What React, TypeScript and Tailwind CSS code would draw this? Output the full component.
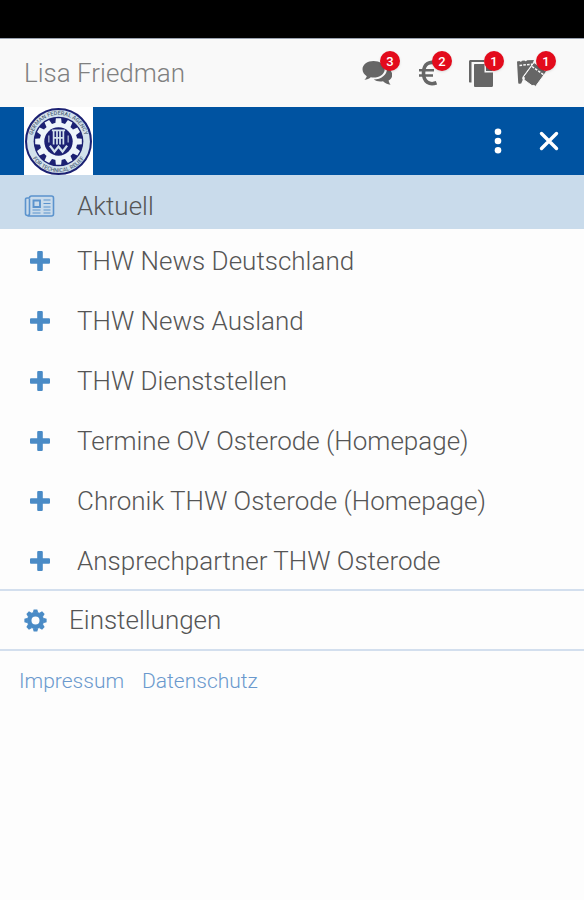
import { useState } from 'react';

type IconProps = { className?: string };

const shortcuts = [
  { id: 'chat', label: 'Nachrichten', count: 3, Icon: CommentsIcon },
  { id: 'fees', label: 'Beiträge', count: 2, Icon: EuroIcon },
  { id: 'docs', label: 'Dokumente', count: 1, Icon: CopyIcon },
  { id: 'tickets', label: 'Tickets', count: 1, Icon: TicketsIcon },
];

const sections = [
  'THW News Deutschland',
  'THW News Ausland',
  'THW Dienststellen',
  'Termine OV Osterode (Homepage)',
  'Chronik THW Osterode (Homepage)',
  'Ansprechpartner THW Osterode',
];

const teeth = [0, 30, 60, 90, 120, 150, 180, 210, 240, 270, 300, 330];
const cogTeeth = [0, 45, 90, 135, 180, 225, 270, 315];

function CommentsIcon({ className }: IconProps) {
  return (
    <svg viewBox="0 0 32 28" className={className} fill="currentColor" aria-hidden="true">
      <path d="M13.500 2C7.500 2 2.500 5.500 2.500 10.300c0 2.900 1.700 5.300 4.300 6.900-.4 1.400-1.200 2.500-2.400 3.600 2.700-.2 4.800-1 6.400-2.500 1 .2 1.800.3 2.700.3 6.200 0 11.200-3.500 11.200-8.300S19.700 2 13.500 2Z" />
      <path d="M27 9c.4 6.600-5.400 11-13.300 11.600 2.300 1.700 5.700 2.300 9.300 1.700 2 1.700 4 2.900 7.600 3.500-1.200-1.400-1.800-2.800-2-4.200 2.300-1.400 3.600-3.300 3.600-5.600 0-3.200-2-5.500-5.200-7Z" />
    </svg>
  );
}

function EuroIcon({ className }: IconProps) {
  return (
    <svg viewBox="0 0 32 28" className={className} fill="none" stroke="currentColor" aria-hidden="true">
      <path d="M25 4.500C18 1.500 11.500 4.500 11.500 14c0 9 6 12.500 13 9.800" strokeWidth="3.600" />
      <path d="M7 11.200H22M7 16.500H21" strokeWidth="2.600" />
    </svg>
  );
}

function CopyIcon({ className }: IconProps) {
  return (
    <svg viewBox="0 0 32 28" className={className} fill="currentColor" aria-hidden="true">
      <path d="M5 2.500C5 1.700 5.700 1 6.500 1H20v2H7.500v20.500H6c-.6 0-1-.4-1-1Z" />
      <path d="M11 5h9.500v8.500H29v13c0 .8-.5 1.500-1.300 1.500H11.300c-.8 0-1.300-.5-1.300-1.300V6c0-.6.400-1 1-1Z" />
      <path d="M22 5 29 12h-7Z" />
    </svg>
  );
}

function TicketsIcon({ className }: IconProps) {
  return (
    <svg viewBox="0 0 32 28" className={className} fill="currentColor" aria-hidden="true">
      {/* back ticket */}
      <path d="M1 2.500 3.500 2c.5 1 2 1 2.500-.2L8.500 1.500c.6 1 2 1 2.500-.2L18 1l-1.500 3.500L6.800 17.500c-.8 1.200-.8 2.300 0 3.300l-1.600 3.700-1.700.3c-.8.1-1.200-.4-1.300-1.200Z" />
      <path d="M3.500 6.500 16 5.200" stroke="#f9f9f9" strokeWidth="1.500" strokeDasharray="2.600 1.200" />
      {/* front ticket, torn edge on its upper half */}
      <path d="m18 3.500 12.500 9L19.500 27.500c-1.200-1.200-2.200-1.400-3.400-.8L8 20.800c.6-1.200.4-2.200-.3-3.200Z" stroke="#f9f9f9" strokeWidth="1" />
      <path d="m16 7.500 12 8.500" stroke="#f9f9f9" strokeWidth="1.500" strokeDasharray="2.600 1.200" />
    </svg>
  );
}

function NewspaperIcon({ className }: IconProps) {
  return (
    <svg viewBox="0 0 30 22" className={className} fill="none" stroke="currentColor" aria-hidden="true">
      <path d="M5 3.500V18.500a2 2 0 0 1-4 0V4.500a1.500 1.500 0 0 1 1.500-1.500H5M5 3a2 2 0 0 1 2-2h20a2 2 0 0 1 2 2v16a2 2 0 0 1-2 2H3" strokeWidth="1.600" />
      <path d="M9 5.500h6.500v6.500H9Z" strokeWidth="1.900" />
      <path d="M19 5h7M19 8.500h7M19 12h7M8 15h8M19 15h7M8 18h8M19 18h7" strokeWidth="1.100" />
    </svg>
  );
}

function PlusIcon({ className }: IconProps) {
  return (
    <svg viewBox="0 0 20 20" className={className} fill="currentColor" aria-hidden="true">
      <path d="M8.500 0h3c.8 0 1.300.5 1.300 1.300v5.900h5.900c.8 0 1.300.5 1.300 1.300v3c0 .8-.5 1.300-1.300 1.300h-5.900v5.900c0 .8-.5 1.300-1.300 1.300h-3c-.8 0-1.300-.5-1.300-1.300v-5.900H1.300C.5 12.800 0 12.300 0 11.500v-3c0-.8.500-1.300 1.300-1.300h5.900V1.300C7.200.5 7.700 0 8.500 0Z" />
    </svg>
  );
}

function CogIcon({ className }: IconProps) {
  return (
    <svg viewBox="-12 -12 24 24" className={className} fill="currentColor" aria-hidden="true">
      <circle r="6.500" fill="none" stroke="currentColor" strokeWidth="4.600" />
      {cogTeeth.map(a => (
        <path key={a} d="M-2.900-8-1.900-11.600h3.800L2.900-8Z" transform={`rotate(${a})`} />
      ))}
    </svg>
  );
}

function Emblem() {
  return (
    <svg viewBox="-34 -34 68 68" className="w-full" role="img" aria-label="THW">
      <defs>
        <path id="ringTop" d="M-25.500 7A26.400 26.400 0 1 1 25.500 7" />
        <path id="ringBottom" d="M-28 11A30 30 0 0 0 28 11" />
      </defs>
      <circle r="32" fill="#d3e2ec" stroke="#1c2173" strokeWidth="2" />
      <circle r="24.500" fill="#1c2173" />
      <g fill="#eef5fa">
        <circle r="18.500" />
        {teeth.map(a => (
          <path key={a} d="M-3.200-17-2.600-23h5.200L3.200-17Z" transform={`rotate(${a})`} />
        ))}
      </g>
      <circle r="14" fill="#1c2173" />
      <g fill="none" stroke="#d3e2ec">
        <path d="M-6.500-11H6.500M-4.800-10.500V3M4.800-10.500V3M-1.500-10.500V3M1.500-10.500V3M-4.500-3.500h9" strokeWidth="1.700" />
        <path d="M-9.500-6v7M9.500-6v7" strokeWidth="1" />
        <path d="m-8.500 4 4.500 6L0 5l4 5 4.500-6" strokeWidth="2.200" />
      </g>
      <g fill="#53677c" fontSize="5.500" fontWeight="500" textAnchor="middle">
        <text><textPath href="#ringTop" startOffset="50%">GERMAN FEDERAL AGENCY</textPath></text>
        <text><textPath href="#ringBottom" startOffset="50%">FOR TECHNICAL RELIEF</textPath></text>
      </g>
    </svg>
  );
}

export default function App() {
  const [open, setOpen] = useState<string | null>(null);

  return (
    <div className="min-h-screen bg-[#fdfdfd] font-['Roboto',sans-serif] font-light text-[#555]">
      {/* Status bar */}
      <div className="h-[38px] bg-black" />

      <header className="flex h-[69px] items-center justify-between border-t border-gray-400 bg-[#f9f9f9] pl-6 pr-9">
        <h1 className="text-[26px] leading-8 text-[#808080]">Lisa Friedman</h1>
        <div className="flex gap-5">
          {shortcuts.map(({ id, label, count, Icon }) => (
            <button key={id} type="button" aria-label={label} className="relative text-[#666]">
              <Icon className="h-7 w-8" />
              <span className="absolute -right-2 -top-2 flex size-5 items-center justify-center rounded-full bg-[#e30b1c] text-[13px] font-medium leading-none text-white shadow-sm">
                {count}
              </span>
            </button>
          ))}
        </div>
      </header>

      <div className="flex h-[68px] items-center justify-between bg-[#0053a1] pl-6 pr-6 text-white">
        <div className="w-[69px] self-stretch overflow-hidden bg-white">
          <Emblem />
        </div>
        <div className="flex items-center gap-7">
          <button type="button" aria-label="Mehr">
            <svg viewBox="0 0 24 26" className="h-[26px] w-6" fill="currentColor" aria-hidden="true">
              <circle cx="12" cy="3.800" r="3.300" />
              <circle cx="12" cy="13" r="3.300" />
              <circle cx="12" cy="22.200" r="3.300" />
            </svg>
          </button>
          <button type="button" aria-label="Schließen">
            <svg viewBox="0 0 22 22" className="size-[22px]" stroke="currentColor" strokeWidth="3.400" aria-hidden="true">
              <path d="m3.500 3.500 15 15M18.500 3.500l-15 15" strokeLinecap="round" />
            </svg>
          </button>
        </div>
      </div>

      {/* Menu */}
      <nav className="text-[26px] leading-8">
        <a href="#aktuell" className="flex h-[54px] items-center gap-[22px] bg-[#c9dbeb] px-6 pt-2">
          <NewspaperIcon className="h-[22px] w-[31px] text-[#5b93cd]" />
          Aktuell
        </a>
        <ul>
          {sections.map(s => (
            <li key={s}>
              <button
                type="button"
                aria-expanded={open === s}
                onClick={() => setOpen(open === s ? null : s)}
                className="flex h-[60px] w-full items-center gap-[22px] px-6 pt-1 text-left"
              >
                <span className="flex w-[31px] justify-center">
                  <PlusIcon className="size-5 text-[#4a8bc6]" />
                </span>
                {s}
              </button>
            </li>
          ))}
        </ul>
        <a href="#einstellungen" className="flex h-[62px] items-center gap-[22px] border-y-2 border-[#d3dfee] px-6">
          <CogIcon className="size-[23px] text-[#4a8bc6]" />
          Einstellungen
        </a>
      </nav>

      <footer className="flex gap-[18px] px-[19px] py-[14px] text-[21px] leading-8 text-[#6a99cd]">
        <a href="#impressum">Impressum</a>
        <a href="#datenschutz">Datenschutz</a>
      </footer>
    </div>
  );
}
